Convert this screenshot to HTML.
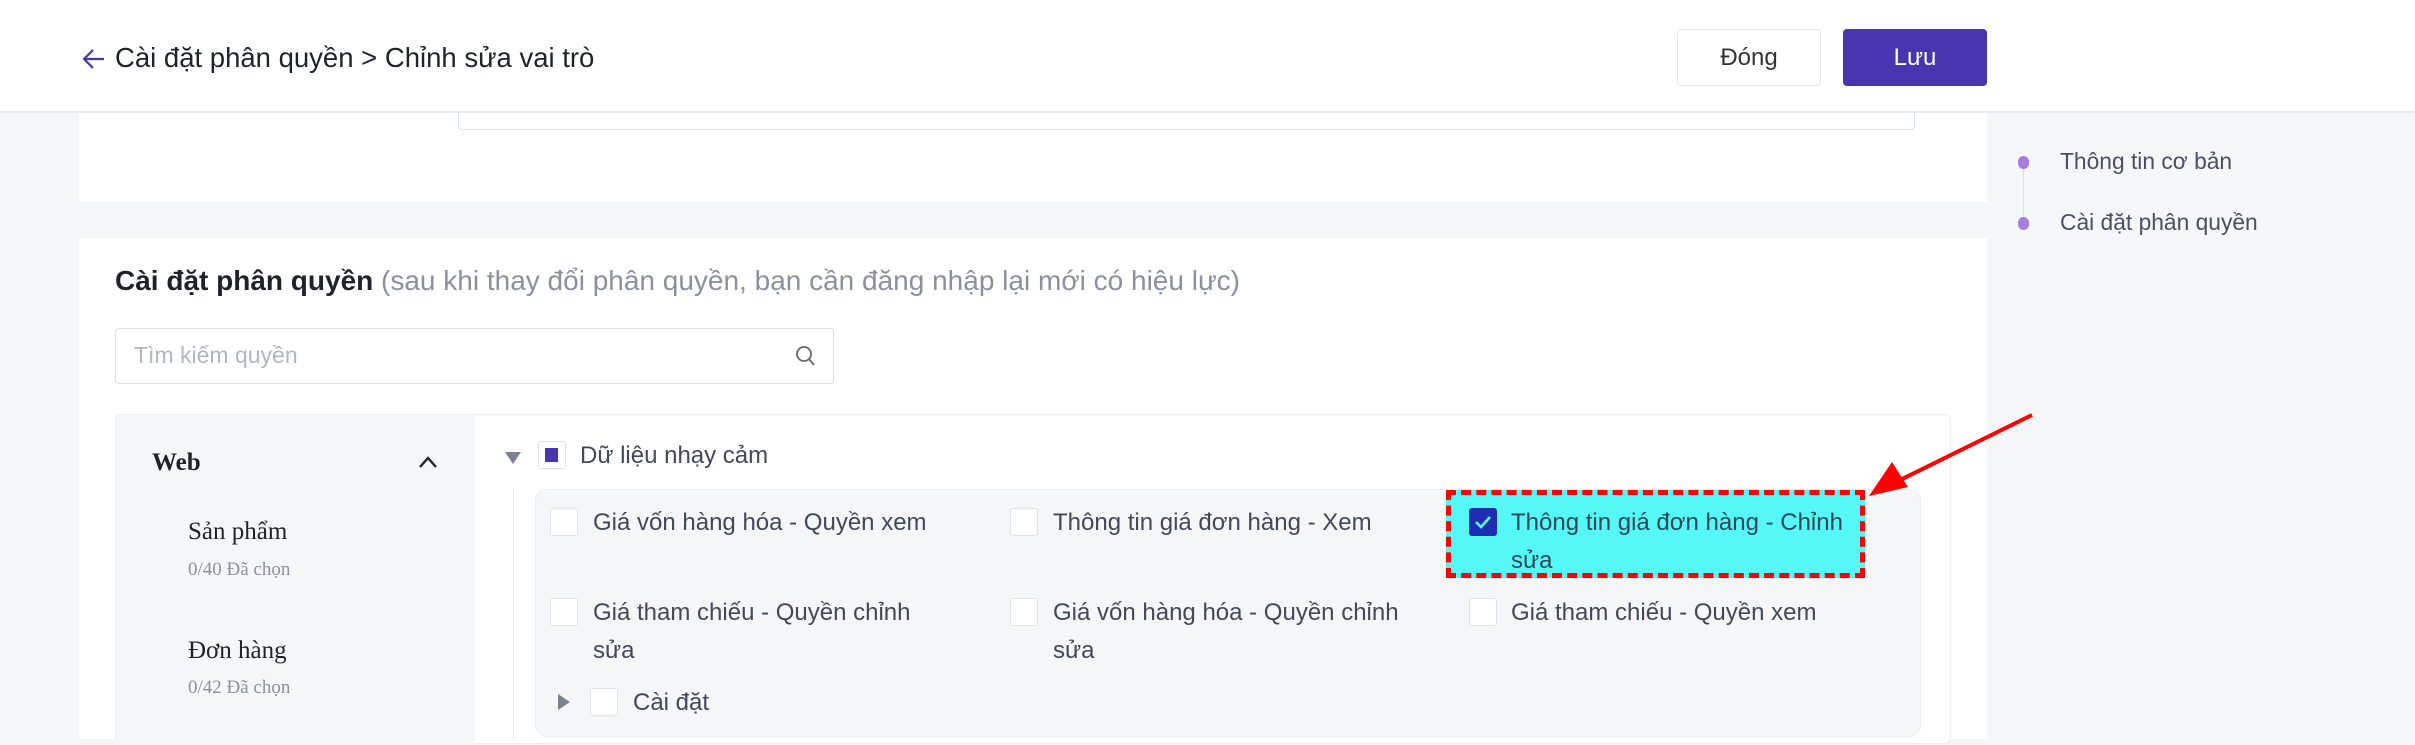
<!DOCTYPE html>
<html><head><meta charset="utf-8"><style>
*{box-sizing:border-box;margin:0;padding:0}
body{width:2415px;height:739px;overflow:hidden;background:#f5f6f8;font-family:"Liberation Sans","Noto Sans CJK SC",sans-serif;position:relative;color:#3b4150}
.abs{position:absolute}
.hdr{left:0;top:0;width:2415px;height:113px;background:#fff;border-bottom:2px solid #e8ebf0;z-index:5}
.btn{top:29px;height:57px;width:144px;border-radius:4px;font-size:24px;display:flex;align-items:center;justify-content:center}
.cb{width:28px;height:28px;background:#fff;border:1px solid #dfe2e7;border-radius:3px}
.t{font-size:24px;color:#414858;line-height:38px}
.serif{font-family:"Liberation Serif",serif}
</style></head><body>
<div class="abs hdr">
  <svg class="abs" style="left:82px;top:48px" width="24" height="22" viewBox="0 0 24 22"><path d="M22 11H3M11 2L2 11l9 9" fill="none" stroke="#4a35b0" stroke-width="2.2"/></svg>
  <div class="abs" style="left:115px;top:42px;font-size:27.5px;color:#1f2329">Cài đặt phân quyền &gt; Chỉnh sửa vai trò</div>
  <div class="abs btn" style="left:1677px;border:1px solid #e2e4e8;background:#fff;color:#333">Đóng</div>
  <div class="abs btn" style="left:1843px;background:#4a35b0;color:#fff">Lưu</div>
</div>
<div class="abs" style="left:79px;top:113px;width:1908px;height:89px;background:#fff"></div>
<div class="abs" style="left:458px;top:100px;width:1457px;height:30px;border:1px solid #dcdfe4;border-top:none;border-radius:0 0 4px 4px;background:#fff"></div>
<div class="abs" style="left:2023px;top:163px;width:1px;height:61px;background:#ddd"></div>
<div class="abs" style="left:2018px;top:156px;width:11px;height:13px;border-radius:6px;background:#a47fe0"></div>
<div class="abs" style="left:2018px;top:217px;width:11px;height:13px;border-radius:6px;background:#a47fe0"></div>
<div class="abs" style="left:2060px;top:148px;font-size:22.8px;color:#4a5060">Thông tin cơ bản</div>
<div class="abs" style="left:2060px;top:209px;font-size:22.8px;color:#4a5060">Cài đặt phân quyền</div>
<div class="abs" style="left:79px;top:238px;width:1908px;height:501px;background:#fff"></div>
<div class="abs" style="left:115px;top:265px;font-size:28px;color:#1f2329;white-space:nowrap"><b>Cài đặt phân quyền</b> <span style="color:#8a909c">(sau khi thay đổi phân quyền, bạn cần đăng nhập lại mới có hiệu lực)</span></div>
<div class="abs" style="left:115px;top:328px;width:719px;height:56px;border:1px solid #dcdfe4;border-radius:4px;background:#fff"></div>
<div class="abs" style="left:134px;top:342px;font-size:23px;color:#b2b6be">Tìm kiếm quyền</div>
<svg class="abs" style="left:795px;top:344px" width="22" height="24" viewBox="0 0 22 24"><circle cx="9" cy="10" r="7" fill="none" stroke="#666" stroke-width="1.8"/><path d="M14 15l5 6" stroke="#666" stroke-width="1.8"/></svg>
<div class="abs" style="left:115px;top:414px;width:1836px;height:330px;border:1px solid #eceef1;border-radius:6px;background:#fff"></div>
<div class="abs" style="left:116px;top:415px;width:359px;height:330px;background:#f5f6f8;border-radius:6px 0 0 0"></div>
<div class="abs serif" style="left:152px;top:449px;font-size:25px;font-weight:bold;color:#1f2329">Web</div>
<svg class="abs" style="left:418px;top:455px" width="20" height="14" viewBox="0 0 20 14"><path d="M2 12L10 3l8 9" fill="none" stroke="#222" stroke-width="2.4"/></svg>
<div class="abs serif" style="left:188px;top:518px;font-size:25px;color:#1f2329">Sản phẩm</div>
<div class="abs serif" style="left:188px;top:559px;font-size:19px;color:#8a909c">0/40 Đã chọn</div>
<div class="abs serif" style="left:188px;top:637px;font-size:25px;color:#1f2329">Đơn hàng</div>
<div class="abs serif" style="left:188px;top:677px;font-size:19px;color:#8a909c">0/42 Đã chọn</div>
<svg class="abs" style="left:505px;top:452px" width="16" height="12"><path d="M0 0h16L8 12z" fill="#7d838e"/></svg>
<div class="abs cb" style="left:538px;top:441px"></div>
<div class="abs" style="left:545px;top:448px;width:13px;height:14px;background:#4a35b0"></div>
<div class="abs t" style="left:580px;top:437px">Dữ liệu nhạy cảm</div>
<div class="abs" style="left:513px;top:489px;width:1px;height:250px;background:#e6e8ec"></div>
<div class="abs" style="left:535px;top:489px;width:1386px;height:248px;background:#f5f6f8;border:1px solid #eceef1;border-radius:12px"></div>
<div class="abs" style="left:1446px;top:490px;width:419px;height:88px;background:#55f7f7;border:5px dashed #f00"></div>
<div class="abs cb" style="left:550px;top:508px"></div>
<div class="abs t" style="left:593px;top:504px">Giá vốn hàng hóa - Quyền xem</div>
<div class="abs cb" style="left:1010px;top:508px"></div>
<div class="abs t" style="left:1053px;top:504px">Thông tin giá đơn hàng - Xem</div>
<div class="abs" style="left:1469px;top:508px;width:28px;height:28px;background:#1f2db5;border-radius:3px"></div>
<svg class="abs" style="left:1469px;top:508px" width="28" height="28"><path d="M7 14l5 5 9-10" fill="none" stroke="#5ff" stroke-width="2.6"/></svg>
<div class="abs t" style="left:1511px;top:504px;width:345px;color:#2a4a5a">Thông tin giá đơn hàng - Chỉnh sửa</div>
<div class="abs cb" style="left:550px;top:598px"></div>
<div class="abs t" style="left:593px;top:594px;width:330px">Giá tham chiếu - Quyền chỉnh sửa</div>
<div class="abs cb" style="left:1010px;top:598px"></div>
<div class="abs t" style="left:1053px;top:594px;width:360px">Giá vốn hàng hóa - Quyền chỉnh sửa</div>
<div class="abs cb" style="left:1469px;top:598px"></div>
<div class="abs t" style="left:1511px;top:594px">Giá tham chiếu - Quyền xem</div>
<svg class="abs" style="left:558px;top:694px" width="12" height="16"><path d="M0 0l12 8-12 8z" fill="#7d838e"/></svg>
<div class="abs cb" style="left:590px;top:688px"></div>
<div class="abs t" style="left:633px;top:684px">Cài đặt</div>
<svg class="abs" style="left:1860px;top:405px" width="180" height="100"><path d="M172 10L30 80" stroke="#f00" stroke-width="4"/><path d="M9 91L32 57L48 82z" fill="#f00"/></svg>
</body></html>
